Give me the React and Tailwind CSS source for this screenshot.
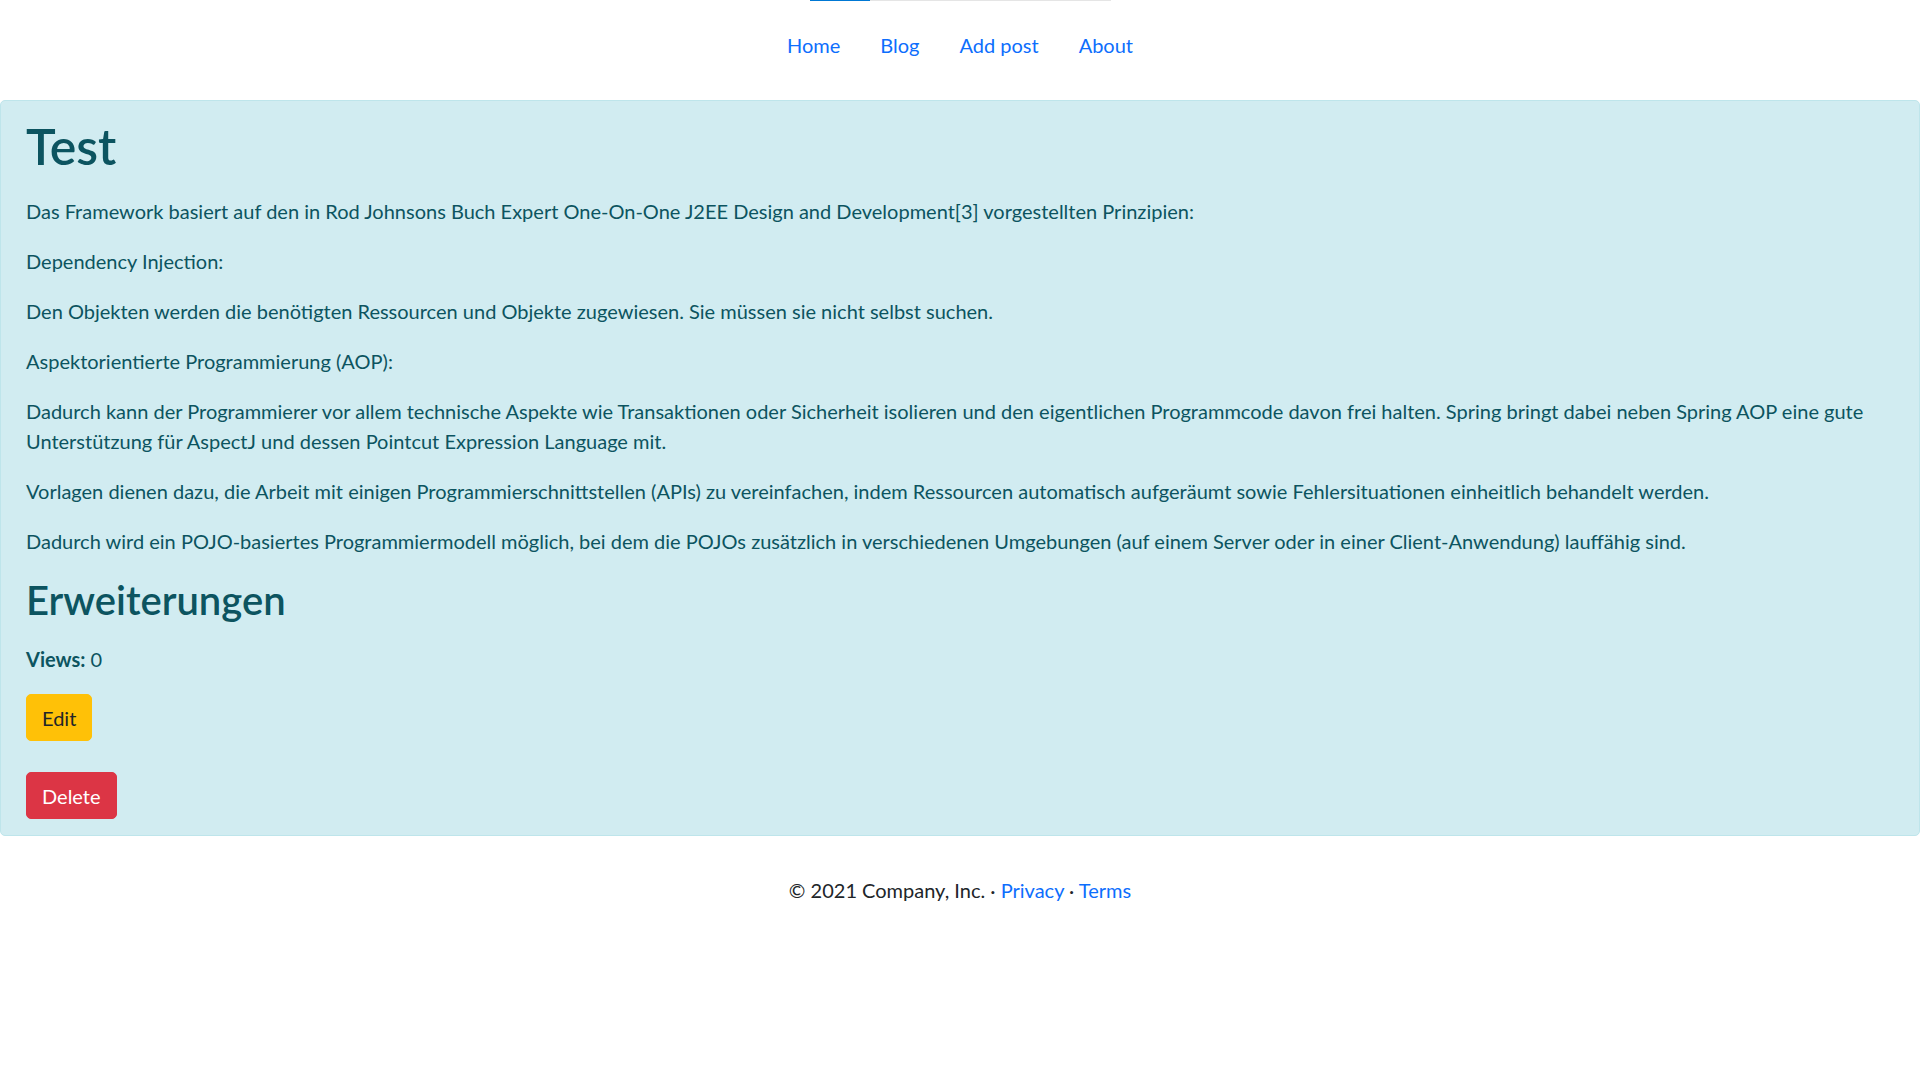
const PARAGRAPHS = [
  'Das Framework basiert auf den in Rod Johnsons Buch Expert One-On-One J2EE Design and Development[3] vorgestellten Prinzipien:',
  'Dependency Injection:',
  'Den Objekten werden die benötigten Ressourcen und Objekte zugewiesen. Sie müssen sie nicht selbst suchen.',
  'Aspektorientierte Programmierung (AOP):',
  'Dadurch kann der Programmierer vor allem technische Aspekte wie Transaktionen oder Sicherheit isolieren und den eigentlichen Programmcode davon frei halten. Spring bringt dabei neben Spring AOP eine gute Unterstützung für AspectJ und dessen Pointcut Expression Language mit.',
  'Vorlagen dienen dazu, die Arbeit mit einigen Programmierschnittstellen (APIs) zu vereinfachen, indem Ressourcen automatisch aufgeräumt sowie Fehlersituationen einheitlich behandelt werden.',
  'Dadurch wird ein POJO-basiertes Programmiermodell möglich, bei dem die POJOs zusätzlich in verschiedenen Umgebungen (auf einem Server oder in einer Client-Anwendung) lauffähig sind.',
]

const NAV = ['Home', 'Blog', 'Add post', 'About']

export default function App() {
  return (
    <div className="min-h-screen bg-white font-[Lato,'Liberation_Sans',sans-serif] text-[20px] leading-[30px] text-[#212529]">
      {/* progress strip */}
      <div className="flex justify-center">
        <div className="w-[301px] h-px bg-[#e5e5e5]">
          <div className="w-[60px] h-full bg-[#0078d4]" />
        </div>
      </div>

      {/* Nav */}
      <nav className="flex justify-center mt-[19px]">
        {NAV.map(n => (
          <a key={n} href="#" className="px-5 py-[10px] text-[#0d6efd]">{n}</a>
        ))}
      </nav>

      {/* Post */}
      <div className="mt-[30px] bg-[#d1ecf1] border border-[#bee5eb] rounded-[5px] px-[25px] pt-[15px] pb-[16px] text-[#0c5460]">
        <h1 className="text-[50px] leading-[60px] font-semibold mb-[20px]">Test</h1>
        {PARAGRAPHS.map((p, i) => (
          <p key={i} className="mb-[20px]">{p}</p>
        ))}
        <h2 className="text-[40px] leading-[48px] font-semibold mb-[20px]">Erweiterungen</h2>
        <p className="mb-[20px]"><strong className="font-bold">Views:</strong> 0</p>
        <div className="mb-[31px]">
          <button className="px-[15px] py-[7.5px] border border-[#ffc107] bg-[#ffc107] text-[#212529] rounded-[5px]">Edit</button>
        </div>
        <div>
          <button className="px-[15px] py-[7.5px] border border-[#dc3545] bg-[#dc3545] text-white rounded-[5px]">Delete</button>
        </div>
      </div>

      {/* Footer */}
      <footer className="mt-[39px] text-center">
        © 2021 Company, Inc. · <a href="#" className="text-[#0d6efd]">Privacy</a> · <a href="#" className="text-[#0d6efd]">Terms</a>
      </footer>
    </div>
  )
}
